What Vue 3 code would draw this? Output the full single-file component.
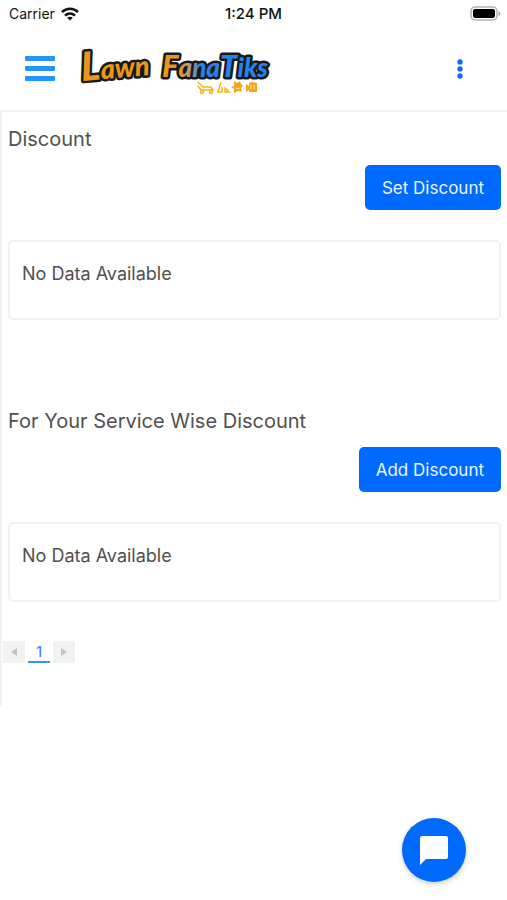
<script setup>
const sections = [
  { title: 'Discount', action: 'Set Discount', message: 'No Data Available' },
  { title: 'For Your Service Wise Discount', action: 'Add Discount', message: 'No Data Available' }
]
</script>

<template>
  <div class="screen">
    <div class="status">
      <div class="carrier">
        <span>Carrier</span>
        <svg width="18" height="14" viewBox="0 0 18 14" fill="none" stroke="#111" stroke-width="2.6" aria-hidden="true">
          <path d="M1 5.1C5.6.7 12.4.7 17 5.1" />
          <path d="M4 8.6c2.900-2.700 7.100-2.700 10 0" />
          <path d="M9 13.600 6.200 10.800c1.600-1.500 4-1.500 5.600 0z" fill="#111" stroke="none" />
        </svg>
      </div>
      <div class="time">1:24 PM</div>
      <div class="battery">
        <svg width="32" height="15" viewBox="0 0 32 15" aria-hidden="true">
          <rect x="1" y="1" width="26" height="13" rx="4" fill="#fff" stroke="#b4b4b4" stroke-width="1.500" />
          <rect x="3" y="3" width="22" height="9" rx="2" fill="#000" />
          <path d="M28.500 5.200c2.600.8 2.600 3.800 0 4.600z" fill="#a8a8a8" />
        </svg>
      </div>
    </div>

    <header class="topbar">
      <button class="icon-button menu" aria-label="Menu">
        <svg width="30" height="26" viewBox="0 0 30 26" fill="#2394fa" aria-hidden="true">
          <rect width="30" height="5" rx="1" />
          <rect y="10" width="30" height="5" rx="1" />
          <rect y="20" width="30" height="5" rx="1" />
        </svg>
      </button>
      <a class="logo" href="#" aria-label="Lawn Fanatiks">
        <svg width="200" height="60" viewBox="0 -2 200 60">
          <defs>
            <linearGradient id="fan" gradientUnits="userSpaceOnUse" x1="84" y1="0" x2="190" y2="0">
              <stop offset="0" stop-color="#e9971b" />
              <stop offset=".16" stop-color="#e9971b" />
              <stop offset=".25" stop-color="#b99a78" />
              <stop offset=".38" stop-color="#2582ee" />
              <stop offset="1" stop-color="#2582ee" />
            </linearGradient>
          </defs>
          <g class="wordmark">
            <text x="4" y="40" fill="#e9971b" transform="rotate(-5 4 40)"><tspan class="initial">L</tspan>awn</text>
            <text class="second" x="84" y="36" fill="url(#fan)"><tspan class="cap">F</tspan>ana<tspan class="cap">T</tspan>iks</text>
          </g>
          <g fill="none" stroke="#f8b719" stroke-width="1.500">
            <path d="m120 41 5 5h8l2 3h-12l-3-4" />
            <circle cx="124" cy="51" r="1.500" /><circle cx="133" cy="51" r="1.500" />
            <path d="m143 41-3 10h4v-5M147 47l4 4h-4z" />
          </g>
          <g fill="#f3a51c">
            <path d="m156 40 3 2 3-2 1 3 2 2-2 2 1 4-4-1-4 2v-4l-3-2 3-1z" />
            <path d="m168 43 3 2v-3l3-1 5 1v9h-8v-2l-3 2z" />
          </g>
          <path d="M158 47q2 2 4 0M173 44v4M176 44v4" fill="none" stroke="#fff3bd" />
        </svg>
      </a>
      <button class="icon-button more" aria-label="More options">
        <svg width="8" height="22" viewBox="0 0 8 22" fill="#0c6cf5" aria-hidden="true">
          <circle cx="4" cy="4" r="2.700" /><circle cx="4" cy="11" r="2.700" /><circle cx="4" cy="18" r="2.700" />
        </svg>
      </button>
    </header>

    <main class="content">
      <section v-for="section in sections" :key="section.title" class="section">
        <h2>{{ section.title }}</h2>
        <div class="actions"><button class="primary">{{ section.action }}</button></div>
        <div class="card">{{ section.message }}</div>
      </section>
      <nav class="pages" aria-label="Pagination">
        <button class="step" disabled aria-label="Previous page">
          <svg width="6" height="8" viewBox="0 0 6 8" aria-hidden="true"><path d="M6 0v8L0 4z" fill="#c2c2c2" /></svg>
        </button>
        <a class="current" href="#" aria-current="page">1</a>
        <button class="step" disabled aria-label="Next page">
          <svg width="6" height="8" viewBox="0 0 6 8" aria-hidden="true"><path d="M0 0v8l6-4z" fill="#c2c2c2" /></svg>
        </button>
      </nav>
    </main>

    <button class="chat" aria-label="Open chat">
      <svg width="30" height="30" viewBox="0 0 30 30" fill="#fff" aria-hidden="true">
        <path d="M3 1h24q2 0 2 2v19q0 2-2 2H7l-6 6V3q0-2 2-2z" />
      </svg>
    </button>
  </div>
</template>

<style>
body { background: #fff; }
</style>

<style scoped>
.screen { min-height: 100vh; font-family: Inter, sans-serif; color: #505052; }
button { border: 0; margin: 0; padding: 0; font: inherit; cursor: pointer; }
svg { display: block; }
.status { display: grid; grid-template-columns: 1fr auto 1fr; align-items: center; height: 27px; padding: 0 5px; font-size: 14px; color: #111; }
.carrier { display: flex; align-items: center; gap: 6px; padding-left: 4px; }
.time { font-size: 15px; font-weight: 500; }
.battery { justify-self: end; }
.topbar { display: flex; align-items: center; height: 83px; padding: 0 43px 0 25px; border-bottom: 2px solid #f3f3f4; }
.icon-button { background: none; }
.logo { margin-left: 23px; }
.logo svg { overflow: visible; }
.more { margin-left: auto; }
.wordmark { font-family: Lato, sans-serif; font-size: 27px; font-weight: 900; font-style: italic; stroke: #17191b; stroke-width: 5px; stroke-linejoin: round; paint-order: stroke; }
.initial { font-size: 40px; }
.second { font-size: 26px; }
.cap { font-size: 31px; }
.content { padding: 13px 6px 44px; border-left: 2px solid #f1f1f2; }
.section { margin-bottom: 87px; }
.section:nth-of-type(2) { margin-bottom: 39px; }
h2 { margin: 0 0 12px; font-size: 20px; line-height: 28px; font-weight: 400; }
.actions { display: flex; justify-content: flex-end; margin-bottom: 30px; }
.primary { height: 45px; padding: 0 17px; border-radius: 5px; background: #006aff; color: #e9f5ff; font-size: 17px; }
.card { padding: 20px 12px 32px; border: 2px solid #f0f1f2; border-radius: 5px; font-size: 18px; line-height: 24px; }
.pages { display: flex; gap: 3px; margin-left: -5px; }
.step { display: grid; place-items: center; width: 22px; height: 22px; background: #f1f2f3; }
.current { width: 22px; height: 20px; border-bottom: 2px solid #3f8ff5; color: #3f8ff5; font-size: 15px; font-weight: 500; line-height: 22px; text-align: center; text-decoration: none; }
.chat { position: fixed; right: 41px; bottom: 18px; display: grid; place-items: center; width: 64px; height: 64px; border-radius: 50%; background: #006aff; box-shadow: 0 2px 5px #00000035; }
</style>
